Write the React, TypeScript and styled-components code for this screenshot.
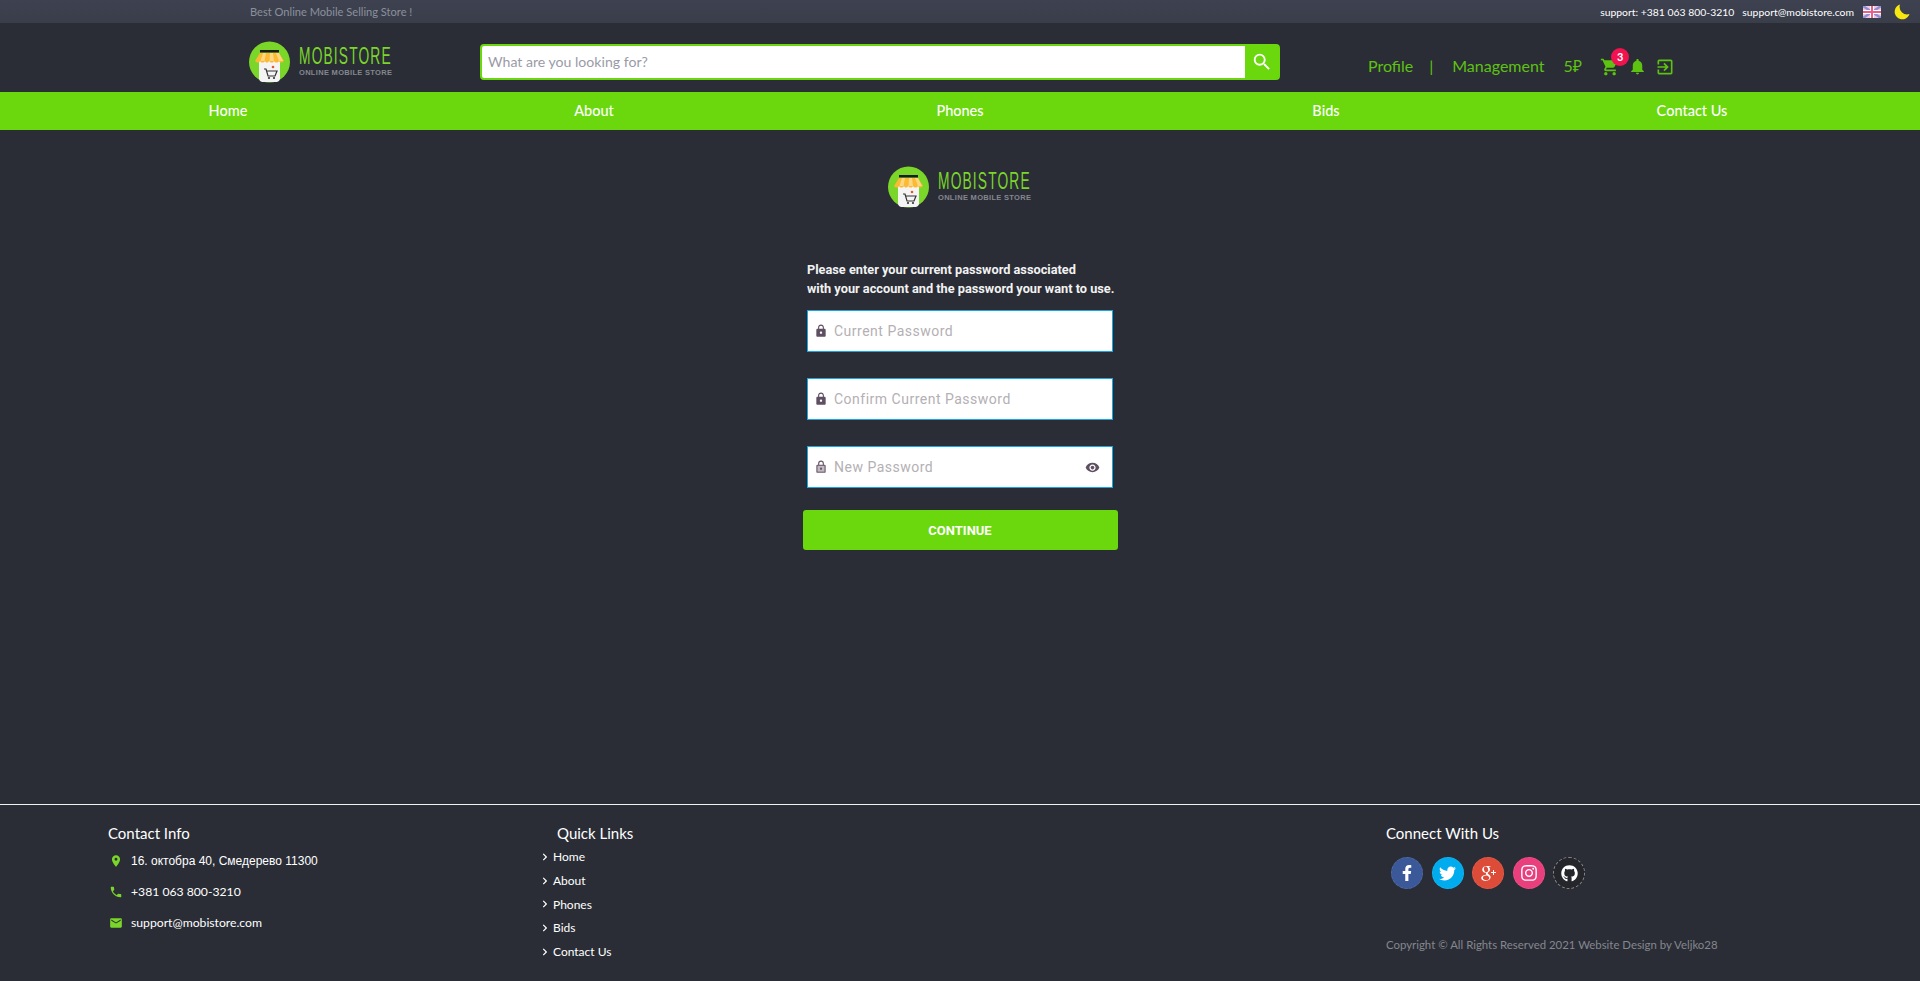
import styled, { createGlobalStyle } from "styled-components";
import {
  MdEmail,
  MdExitToApp,
  MdLocationOn,
  MdLock,
  MdNotifications,
  MdPhone,
  MdSearch,
  MdShoppingCart,
  MdVisibility,
} from "react-icons/md";
import {
  FaChevronRight,
  FaFacebookF,
  FaGithub,
  FaInstagram,
  FaTwitter,
} from "react-icons/fa";
import { TiSocialGooglePlus } from "react-icons/ti";

const navLinks = ["Home", "About", "Phones", "Bids", "Contact Us"];

const Logo = () => (
  <LogoSvg viewBox="0 0 146 42" width="146" height="42">
    <circle cx="20.5" cy="21" r="20.5" fill="#7bd62a" />
    <path d="M10 18h21v20a4 4 0 0 1-3 3H13a4 4 0 0 1-3-3z" fill="#f4f4f4" />
    <rect x="11" y="9" width="19" height="2.5" fill="#1c1c1c" />
    <path d="M11 12h19l5 8c-2 2-4 2-5 0-1 2-4 2-5 0-1 2-3 2-5 0-1 2-3 2-4 0-1 2-4 2-5 0-1 2-3 2-5 0z" fill="#fbb934" />
    <path d="M14 12h3l-1.500 8h-4zM21 12h3l1 8h-4.500zM27 12h3l4 8h-4z" fill="#fdd77f" />
    <path d="M15 28h2l2 7h7l2-5h-10" fill="none" stroke="#333" strokeWidth="1.2" />
    <circle cx="20" cy="37" r="1.1" fill="#333" />
    <circle cx="25" cy="37" r="1.1" fill="#333" />
    <circle cx="24" cy="26" r="1.3" fill="#e2572b" />
    <g transform="translate(50 23) scale(0.6 1)">
      <text fontFamily="'Liberation Sans', sans-serif" fontSize="23" letterSpacing="1.9" fill="#7bd62a">
        MOBISTORE
      </text>
    </g>
    <text x="50" y="34" fontFamily="'Liberation Sans', sans-serif" fontWeight="700" fontSize="7.500" fill="#85878e" textLength="93" lengthAdjust="spacing">
      ONLINE MOBILE STORE
    </text>
  </LogoSvg>
);

const UkFlag = () => (
  <svg width="18" height="12" viewBox="0 0 18 12">
    <rect width="18" height="12" fill="#f3c8d8" />
    <path d="M0 0l18 12M18 0L0 12" stroke="#8f8fd8" strokeWidth="2.4" />
    <path d="M9 0v12M0 6h18" stroke="#fff" strokeWidth="4" />
    <path d="M9 0v12M0 6h18" stroke="#ea5f8c" strokeWidth="2" />
  </svg>
);

const Moon = () => (
  <svg width="16" height="16" viewBox="0 0 16 16">
    <path d="M6 0.5a7.6 7.6 0 0 0 9.5 9.6A7.6 7.6 0 1 1 6 0.5z" fill="#f7e90f" />
  </svg>
);

const OpenLock = () => (
  <svg width="14" height="14" viewBox="0 0 24 24">
    <path d="M18 8h-1V6A5 5 0 0 0 7 6v2H6a2 2 0 0 0-2 2v10a2 2 0 0 0 2 2h12a2 2 0 0 0 2-2V10a2 2 0 0 0-2-2zM9 6a3 3 0 0 1 6 0v2H9z" fill="#6a5a6c" />
    <rect x="6" y="10" width="12" height="10" fill="#c2bac2" />
    <circle cx="12" cy="15" r="2" fill="#6a5a6c" />
  </svg>
);

const App = () => {
  return (
    <Page>
      <GlobalStyle />
      <TopBar>
        <Slogan>Best Online Mobile Selling Store !</Slogan>
        <TopInfo>
          <span>support: +381 063 800-3210</span>
          <span>support@mobistore.com</span>
          <FlagSlot>
            <UkFlag />
          </FlagSlot>
          <MoonSlot>
            <Moon />
          </MoonSlot>
        </TopInfo>
      </TopBar>

      <Header>
        <Logo />
        <SearchForm onSubmit={(e) => e.preventDefault()}>
          <SearchInput type="text" placeholder="What are you looking for?" />
          <SearchBtn type="submit">
            <MdSearch size={22} />
          </SearchBtn>
        </SearchForm>
        <UserMenu>
          <MenuLink>Profile</MenuLink>
          <Divider>|</Divider>
          <MenuLink>Management</MenuLink>
          <Points>5₽</Points>
          <MenuIcons>
            <CartWrap>
              <MdShoppingCart size={20} />
              <Badge>3</Badge>
            </CartWrap>
            <MdNotifications size={19} />
            <MdExitToApp size={20} />
          </MenuIcons>
        </UserMenu>
      </Header>

      <Nav>
        {navLinks.map((link) => (
          <NavItem key={link}>{link}</NavItem>
        ))}
      </Nav>

      <Main>
        <MainLogo>
          <Logo />
        </MainLogo>
        <Form onSubmit={(e) => e.preventDefault()}>
          <Intro>
            Please enter your current password associated
            <br />
            with your account and the password your want to use.
          </Intro>
          <Field>
            <MdLock size={14} />
            <PasswordInput type="password" placeholder="Current Password" />
          </Field>
          <Field>
            <MdLock size={14} />
            <PasswordInput type="password" placeholder="Confirm Current Password" />
          </Field>
          <Field>
            <OpenLock />
            <PasswordInput type="password" placeholder="New Password" />
            <MdVisibility size={15} />
          </Field>
          <SubmitBtn type="submit">CONTINUE</SubmitBtn>
        </Form>
      </Main>

      <Footer>
        <ContactCol>
          <ContactTitle>Contact Info</ContactTitle>
          <ContactRow $arial>
            <MdLocationOn size={14} />
            <span>16. октобра 40, Смедерево 11300</span>
          </ContactRow>
          <ContactRow>
            <MdPhone size={14} />
            <span>+381 063 800-3210</span>
          </ContactRow>
          <ContactRow>
            <MdEmail size={14} />
            <span>support@mobistore.com</span>
          </ContactRow>
        </ContactCol>
        <LinksCol>
          <LinksTitle>Quick Links</LinksTitle>
          {navLinks.map((link) => (
            <QuickLink key={link}>
              <FaChevronRight size={8} />
              <span>{link}</span>
            </QuickLink>
          ))}
        </LinksCol>
        <ConnectCol>
          <FooterTitle>Connect With Us</FooterTitle>
          <Socials>
            <Social $bg="#3b5998"><FaFacebookF size={16} /></Social>
            <Social $bg="#00aced"><FaTwitter size={17} /></Social>
            <Social $bg="#dd4b39"><TiSocialGooglePlus size={24} /></Social>
            <Social $bg="#ea3f7d"><FaInstagram size={18} /></Social>
            <Social $bg="#24262b" $dashed><FaGithub size={17} /></Social>
          </Socials>
          <Copyright>Copyright © All Rights Reserved 2021 Website Design by Veljko28</Copyright>
        </ConnectCol>
      </Footer>
    </Page>
  );
};

export default App;

const GlobalStyle = createGlobalStyle`
  html, body {
    margin: 0;
    padding: 0;
    background: #2a2d36;
  }
  * {
    box-sizing: border-box;
  }
`;

const Page = styled.div`
  width: 1920px;
  height: 981px;
  overflow: hidden;
  display: flex;
  flex-direction: column;
  background: #2a2d36;
  color: #fff;
  font-family: Lato, "Noto Sans", sans-serif;
`;

const TopBar = styled.div`
  height: 23px;
  flex: none;
  display: flex;
  align-items: center;
  justify-content: space-between;
  padding-left: 250px;
  background: linear-gradient(#3e4250, #3a3e4b);
`;
const Slogan = styled.span`
  font-size: 11.1px;
  color: #8b909c;
`;
const TopInfo = styled.div`
  display: flex;
  align-items: center;
  gap: 8px;
  padding-right: 10px;
  font-size: 10.4px;
`;
const FlagSlot = styled.span`
  display: flex;
  margin-left: 1px;
`;
const MoonSlot = styled.span`
  display: flex;
  margin-left: 5px;
`;

const Header = styled.header`
  height: 69px;
  flex: none;
  display: flex;
  align-items: center;
  padding: 9px 0 0 249px;
`;
const LogoSvg = styled.svg`
  flex: none;
  display: block;
`;
const SearchForm = styled.form`
  width: 800px;
  height: 36px;
  margin-left: 85px;
  display: flex;
  border: 2px solid #6ad80d;
  border-radius: 4px;
  background: #fff;
`;
const SearchInput = styled.input`
  flex: 1;
  border: none;
  outline: none;
  padding: 0 6px 1px;
  background: none;
  border-radius: 2px 0 0 2px;
  font-family: inherit;
  font-size: 14.1px;
  &::placeholder {
    color: #9a9aa6;
  }
`;
const SearchBtn = styled.button`
  width: 33px;
  border: none;
  padding: 0;
  display: flex;
  align-items: center;
  justify-content: center;
  background: #6ad80d;
  color: #fff;
`;
const UserMenu = styled.div`
  margin-left: 88px;
  margin-top: 7px;
  display: flex;
  align-items: center;
  color: #5ec212;
  font-size: 16px;
`;
const MenuLink = styled.span``;
const Divider = styled.span`
  margin: 0 19px 0 16px;
`;
const Points = styled.span`
  margin-left: 19px;
`;
const MenuIcons = styled.div`
  display: flex;
  align-items: center;
  gap: 8px;
  margin-left: 18px;
  padding-top: 2px;
`;
const CartWrap = styled.span`
  position: relative;
  display: flex;
`;
const Badge = styled.span`
  position: absolute;
  top: -9px;
  left: 11px;
  width: 18px;
  height: 18px;
  border-radius: 50%;
  background: #f0134f;
  color: #fff;
  font-size: 11px;
  font-weight: 700;
  display: flex;
  align-items: center;
  justify-content: center;
`;

const Nav = styled.nav`
  height: 38px;
  flex: none;
  display: grid;
  grid-template-columns: repeat(5, 1fr);
  padding: 0 45px 2px;
  background: #6ad80d;
`;
const NavItem = styled.a`
  display: flex;
  align-items: center;
  justify-content: center;
  font-size: 14.5px;
  font-weight: 500;
  color: #fff;
`;

const Main = styled.main`
  flex: 1;
  display: flex;
  flex-direction: column;
  align-items: center;
  padding-top: 36px;
`;
const MainLogo = styled.div`
  margin-left: 1px;
`;
const Form = styled.form`
  width: 315px;
  margin-top: 52px;
  display: flex;
  flex-direction: column;
  align-items: center;
  font-family: Roboto, sans-serif;
`;
const Intro = styled.p`
  width: 306px;
  margin: 0 0 12px;
  font-size: 12.75px;
  font-weight: 700;
  line-height: 19px;
  color: #f2f2f2;
  white-space: nowrap;
`;
const Field = styled.label`
  width: 306px;
  height: 42px;
  margin-bottom: 26px;
  display: flex;
  align-items: center;
  gap: 6px;
  padding: 0 12px 0 6px;
  background: #fff;
  border: 1px solid #14a8e6;
  color: #5f4f62;
`;
const PasswordInput = styled.input`
  flex: 1;
  min-width: 0;
  border: none;
  outline: none;
  background: none;
  padding: 0;
  font-family: Roboto, sans-serif;
  font-size: 14px;
  letter-spacing: 0.5px;
  &::placeholder {
    color: #b4b0b4;
  }
`;
const SubmitBtn = styled.button`
  width: 315px;
  height: 40px;
  margin-top: -4px;
  border: none;
  border-radius: 3px;
  background: #6ad80d;
  color: #fff;
  font-family: Roboto, sans-serif;
  font-size: 13px;
  font-weight: 700;
`;

const Footer = styled.footer`
  height: 177px;
  flex: none;
  display: flex;
  padding: 17px 0 0 108px;
  border-top: 1px solid #f2f2f2;
`;
const FooterTitle = styled.h4`
  margin: 0;
  font-size: 15px;
  font-weight: 400;
  line-height: 22px;
`;
const ContactTitle = styled(FooterTitle)`
  margin-bottom: 1px;
`;
const ContactCol = styled.div`
  width: 433px;
  flex: none;
`;
const ContactRow = styled.div<{ $arial?: boolean }>`
  height: 31px;
  display: flex;
  align-items: center;
  gap: 8px;
  padding-left: 1px;
  font-size: ${(p) => (p.$arial ? "12px" : "12.2px")};
  font-family: ${(p) => (p.$arial ? '"Liberation Sans", sans-serif' : "inherit")};
  svg {
    color: #7bd62a;
    flex: none;
  }
`;
const LinksCol = styled.div`
  width: 845px;
  flex: none;
`;
const LinksTitle = styled(FooterTitle)`
  margin: 0 0 1px 16px;
`;
const QuickLink = styled.div`
  height: 23.7px;
  display: flex;
  align-items: center;
  gap: 4px;
  font-size: 12px;
`;
const ConnectCol = styled.div`
  flex: 1;
  display: flex;
  flex-direction: column;
`;
const Socials = styled.div`
  display: flex;
  gap: 8.5px;
  margin: 13px 0 0 5px;
`;
const Social = styled.a<{ $bg: string; $dashed?: boolean }>`
  width: 32px;
  height: 32px;
  border-radius: 50%;
  display: flex;
  align-items: center;
  justify-content: center;
  background: ${(p) => p.$bg};
  color: #fff;
  border: 1px dashed ${(p) => (p.$dashed ? "#888" : "rgba(255, 255, 255, 0.1)")};
`;
const Copyright = styled.p`
  margin: 49px 0 0;
  font-size: 11.4px;
  color: #85878e;
`;
